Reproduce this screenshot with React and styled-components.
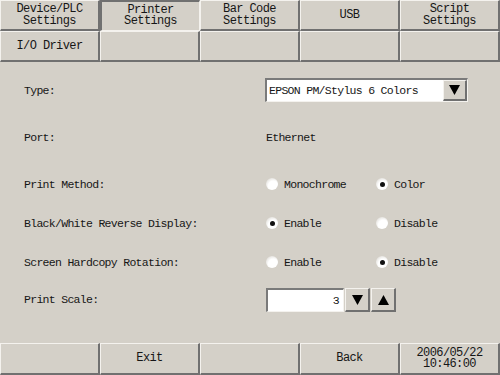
import React from "react";
import styled, { createGlobalStyle, css } from "styled-components";

const Global = createGlobalStyle`
  html, body { margin: 0; padding: 0; background: #d4d0c8; }
  body { font-family: "Liberation Mono", "DejaVu Sans Mono", monospace; }
`;

const FONT = `"Liberation Mono", "DejaVu Sans Mono", monospace`;

const Screen = styled.div`
  width: 500px;
  height: 375px;
  display: flex;
  flex-direction: column;
  background: #d4d0c8;
  color: #161616;
  font-family: ${FONT};
  font-size: 11.5px;
  letter-spacing: -0.7px;
  overflow: hidden;
`;

const raised = css`
  border-top: 1px solid #f4f2ee;
  border-left: 1px solid #f4f2ee;
  border-right: 2px solid #707070;
  border-bottom: 2px solid #707070;
`;
const pressed = css`
  border-top: 2px solid #707070;
  border-left: 2px solid #707070;
  border-right: 1px solid #f4f2ee;
  border-bottom: 1px solid #f4f2ee;
`;
const sunken = css`
  border-top: 2px solid #7a7a7a;
  border-left: 2px solid #7a7a7a;
  border-right: 1px solid #f4f2ee;
  border-bottom: 1px solid #f4f2ee;
`;

const TabGrid = styled.div`
  display: grid;
  grid-template-columns: repeat(5, 100px);
  grid-template-rows: 31px 31px;
`;

const Key = styled.div`
  box-sizing: border-box;
  ${(p) => (p.$active ? pressed : raised)}
  background: #d4d0c8;
  display: flex;
  align-items: center;
  justify-content: center;
  text-align: center;
  line-height: 11.5px;
  font-size: 12px;
  letter-spacing: -0.6px;
  white-space: pre-line;
  padding-top: ${(p) => (p.$active ? "0" : "1px")};
`;

const Content = styled.div`
  flex: 1;
  display: flex;
  flex-direction: column;
  padding-top: 16px;
`;

const Row = styled.div`
  display: flex;
  align-items: center;
  height: 24px;
  margin-top: ${(p) => p.$mt || 0}px;
`;

const Label = styled.div`
  width: 266px;
  padding-left: 24px;
  box-sizing: border-box;
`;

const Value = styled.div`
  display: flex;
  align-items: center;
`;

const Select = styled.div`
  box-sizing: border-box;
  width: 203px;
  height: 24px;
  margin-left: -1px;
  ${sunken}
  background: #fff;
  display: flex;
  align-items: stretch;
`;

const SelectText = styled.div`
  flex: 1;
  display: flex;
  align-items: center;
  padding-left: 2px;
`;

const ArrowBtn = styled.div`
  box-sizing: border-box;
  width: ${(p) => p.$w || 24}px;
  ${raised}
  background: #d4d0c8;
  display: flex;
  align-items: center;
  justify-content: center;
`;

const Option = styled.div`
  width: 110px;
  display: flex;
  align-items: center;
`;

const RadioDot = styled.span`
  box-sizing: border-box;
  width: 12px;
  height: 12px;
  border-radius: 50%;
  background: radial-gradient(circle at 60% 65%, #ffffff 45%, #e6e4e0 75%, #b0ada8 100%);
  display: flex;
  align-items: center;
  justify-content: center;
  margin-right: 6px;
  &::after {
    content: "";
    width: 5px;
    height: 5px;
    border-radius: 50%;
    background: ${(p) => (p.$on ? "#111" : "transparent")};
  }
`;

const Spin = styled.div`
  display: flex;
  height: 24px;
  gap: 1px;
  margin-top: 2px;
`;

const SpinInput = styled.div`
  box-sizing: border-box;
  width: 78px;
  ${sunken}
  background: #fff;
  display: flex;
  align-items: center;
  justify-content: flex-end;
  padding-right: 4px;
`;

const Bottom = styled.div`
  display: grid;
  grid-template-columns: repeat(5, 100px);
  height: 32px;
`;

const Tri = ({ up }) => (
  <svg width="11" height="10" viewBox="0 0 11 10">
    <polygon points={up ? "5.5,0 11,10 0,10" : "0,0 11,0 5.5,10"} fill="#000" />
  </svg>
);

const Radio = ({ on, children }) => (
  <Option>
    <RadioDot $on={on} />
    {children}
  </Option>
);

export default function App() {
  return (
    <Screen>
      <Global />
      <TabGrid>
        <Key>{"Device/PLC\nSettings"}</Key>
        <Key $active>{"Printer\nSettings"}</Key>
        <Key>{"Bar Code\nSettings"}</Key>
        <Key>USB</Key>
        <Key>{"Script\nSettings"}</Key>
        <Key>I/O Driver</Key>
        <Key />
        <Key />
        <Key />
        <Key />
      </TabGrid>
      <Content>
        <Row>
          <Label>Type:</Label>
          <Select>
            <SelectText>EPSON PM/Stylus 6 Colors</SelectText>
            <ArrowBtn $w={24}><Tri /></ArrowBtn>
          </Select>
        </Row>
        <Row $mt={23}>
          <Label>Port:</Label>
          <Value>Ethernet</Value>
        </Row>
        <Row $mt={23}>
          <Label>Print Method:</Label>
          <Value>
            <Radio>Monochrome</Radio>
            <Radio on>Color</Radio>
          </Value>
        </Row>
        <Row $mt={15}>
          <Label>Black/White Reverse Display:</Label>
          <Value>
            <Radio on>Enable</Radio>
            <Radio>Disable</Radio>
          </Value>
        </Row>
        <Row $mt={15}>
          <Label>Screen Hardcopy Rotation:</Label>
          <Value>
            <Radio>Enable</Radio>
            <Radio on>Disable</Radio>
          </Value>
        </Row>
        <Row $mt={13}>
          <Label>Print Scale:</Label>
          <Spin>
            <SpinInput>3</SpinInput>
            <ArrowBtn $w={25}><Tri /></ArrowBtn>
            <ArrowBtn $w={25}><Tri up /></ArrowBtn>
          </Spin>
        </Row>
      </Content>
      <Bottom>
        <Key />
        <Key>Exit</Key>
        <Key />
        <Key>Back</Key>
        <Key>{"2006/05/22\n10:46:00"}</Key>
      </Bottom>
    </Screen>
  );
}
